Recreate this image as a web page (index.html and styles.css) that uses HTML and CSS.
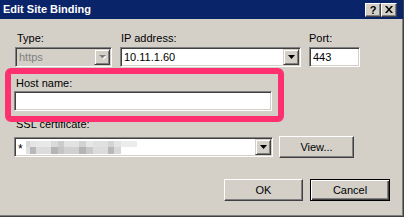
FILE: index.html
```html
<!DOCTYPE html>
<html>
<head>
<meta charset="utf-8">
<link rel="stylesheet" href="styles.css">
</head>
<body>
<div class="window">
  <div class="titlebar">
    <span class="title">Edit Site Binding</span>
    <div class="tb-buttons">
      <span class="tb-btn tb-help">?</span>
      <span class="tb-btn"><svg width="8" height="7" viewBox="0 0 8 7"><path d="M0 0h2l2 2.5L6 0h2L5 3.5 8 7H6L4 4.5 2 7H0l3-3.5z" fill="#000"/></svg></span>
    </div>
  </div>
  <div class="content">
    <div class="row1">
      <div class="field field-type">
        <label class="lbl">Type:</label>
        <div class="combo combo-disabled">
          <span class="combo-text">https</span>
          <span class="combo-btn"><svg width="7" height="5" viewBox="0 0 7 5"><polygon points="1,1 8,1 4.5,4.5" fill="#fff"/><polygon points="0,0 7,0 3.5,3.5" fill="#808080"/></svg></span>
        </div>
      </div>
      <div class="field field-ip">
        <label class="lbl">IP address:</label>
        <div class="combo">
          <span class="combo-text">10.11.1.60</span>
          <span class="combo-btn"><svg width="7" height="4" viewBox="0 0 7 4"><polygon points="0,0 7,0 3.5,4" fill="#000"/></svg></span>
        </div>
      </div>
      <div class="field field-port">
        <label class="lbl">Port:</label>
        <div class="textbox"><span class="tb-text">443</span></div>
      </div>
    </div>
    <div class="host">
      <label class="lbl">Host name:</label>
      <div class="textbox host-box"></div>
    </div>
    <div class="ssl">
      <label class="lbl">SSL certificate:</label>
      <div class="ssl-row">
        <div class="combo ssl-combo">
          <span class="combo-text"><span class="star">*</span><svg class="mosaic" width="112" height="13" viewBox="0 0 112 13">
            <rect x="0" y="0" width="4" height="6" fill="#d8d8d8"/>
            <rect x="4" y="0" width="6" height="6" fill="#e4e4e4"/>
            <rect x="10" y="0" width="15" height="6" fill="#e8e8e8"/>
            <rect x="25" y="0" width="7" height="6" fill="#dadada"/>
            <rect x="32" y="0" width="6" height="6" fill="#cccccc"/>
            <rect x="38" y="0" width="15" height="6" fill="#e2e2e2"/>
            <rect x="53" y="0" width="7" height="6" fill="#d2d2d2"/>
            <rect x="60" y="0" width="7" height="6" fill="#e6e6e6"/>
            <rect x="67" y="0" width="15" height="6" fill="#e0e0e0"/>
            <rect x="82" y="0" width="6" height="6" fill="#d4d4d4"/>
            <rect x="88" y="0" width="7" height="6" fill="#e4e4e4"/>
            <rect x="95" y="0" width="16" height="6" fill="#ececec"/>
            <rect x="0" y="6" width="4" height="7" fill="#e0e0e0"/>
            <rect x="4" y="6" width="6" height="7" fill="#b8b8b8"/>
            <rect x="10" y="6" width="15" height="7" fill="#dcdcdc"/>
            <rect x="25" y="6" width="7" height="7" fill="#b4b4b4"/>
            <rect x="32" y="6" width="6" height="7" fill="#c4c4c4"/>
            <rect x="38" y="6" width="15" height="7" fill="#d0d0d0"/>
            <rect x="53" y="6" width="7" height="7" fill="#b4b4b4"/>
            <rect x="60" y="6" width="7" height="7" fill="#c8c8c8"/>
            <rect x="67" y="6" width="15" height="7" fill="#dcdcdc"/>
            <rect x="82" y="6" width="6" height="7" fill="#b8b8b8"/>
            <rect x="88" y="6" width="7" height="7" fill="#d8d8d8"/>
          </svg></span>
          <span class="combo-btn"><svg width="7" height="4" viewBox="0 0 7 4"><polygon points="0,0 7,0 3.5,4" fill="#000"/></svg></span>
        </div>
        <button class="btn btn-view">View...</button>
      </div>
    </div>
    <div class="footer">
      <button class="btn btn-ok">OK</button>
      <button class="btn btn-default">Cancel</button>
    </div>
  </div>
  <div class="highlight"></div>
</div>
</body>
</html>
```
FILE: styles.css
```css
html, body {
  margin: 0;
  padding: 0;
}
body {
  width: 404px;
  height: 217px;
  overflow: hidden;
  background: #d4d0c8;
  font-family: "Liberation Sans", Arial, sans-serif;
  font-size: 11px;
  color: #000;
}
.window {
  position: relative;
  width: 404px;
  height: 217px;
  box-sizing: border-box;
  border-right: 1px solid #404040;
  border-bottom: 1px solid #404040;
  box-shadow: inset -1px -1px #808080;
  display: flex;
  flex-direction: column;
}
.titlebar {
  height: 19px;
  background: #0a246a;
  display: flex;
  align-items: center;
  padding: 0 6px 0 3px;
}
.title {
  color: #fff;
  font-weight: bold;
  font-size: 11px;
  line-height: 19px;
}
.tb-buttons {
  margin-left: auto;
  display: flex;
  gap: 0;
}
.tb-btn {
  width: 14px;
  height: 12px;
  background: #d4d0c8;
  border: 1px solid;
  border-color: #fff #404040 #404040 #fff;
  box-shadow: inset -1px -1px #808080;
  display: flex;
  align-items: center;
  justify-content: center;
  font-weight: bold;
  font-size: 11px;
  line-height: 12px;
}
.tb-btn + .tb-btn {
  margin-left: 0;
}
.content {
  flex: 1;
  padding: 13px 13px 0 14px;
  display: flex;
  flex-direction: column;
}
.lbl {
  display: block;
  height: 13px;
  line-height: 13px;
  padding-left: 2px;
}
.row1 {
  display: flex;
  gap: 8px;
  margin-left: 1px;
}
.field .lbl {
  margin-bottom: 2px;
}
.field-type { width: 97px; }
.field-ip { width: 181px; }
.field-ip .lbl { padding-left: 1px; }
.field-port { width: 51px; }
.field-port .lbl { padding-left: 0; }
.combo, .textbox {
  height: 20px;
  box-sizing: border-box;
  background: #fff;
  border: 1px solid;
  border-color: #808080 #fff #fff #808080;
  box-shadow: inset 1px 1px #404040, inset -1px -1px #d4d0c8;
  padding: 1px;
  display: flex;
  align-items: center;
}
.combo-disabled {
  background: #d4d0c8;
  color: #808080;
}
.combo-text {
  flex: 1;
  padding-left: 2px;
  display: flex;
  align-items: center;
  white-space: nowrap;
  overflow: hidden;
}
.combo-btn {
  width: 14px;
  height: 14px;
  background: #d4d0c8;
  border: 1px solid;
  border-color: #d4d0c8 #404040 #404040 #d4d0c8;
  box-shadow: inset 1px 1px #fff, inset -1px -1px #808080;
  display: flex;
  align-items: center;
  justify-content: center;
}
.tb-text {
  padding-left: 2px;
}
.host {
  margin-top: 10px;
}
.host .lbl {
  margin-bottom: 1px;
}
.host-box {
  width: 258px;
}
.ssl {
  margin-top: 7px;
}
.ssl-row {
  margin-top: 5px;
  display: flex;
  align-items: center;
  gap: 6px;
}
.ssl-combo {
  width: 259px;
}
.star {
  width: 8px;
  font-size: 12px;
  padding-top: 3px;
}
.mosaic {
  display: block;
}
.btn {
  height: 22px;
  box-sizing: border-box;
  background: #d4d0c8;
  border: 1px solid;
  border-color: #fff #404040 #404040 #fff;
  box-shadow: inset -1px -1px #808080;
  font-family: "Liberation Sans", Arial, sans-serif;
  font-size: 11px;
  color: #000;
  padding: 0;
  margin: 0;
}
.btn-view {
  width: 75px;
}
.footer {
  margin-top: 21px;
  display: flex;
  justify-content: flex-end;
  gap: 7px;
}
.btn-ok {
  width: 79px;
}
.btn-default {
  width: 80px;
  border: 1px solid #000;
  box-shadow: inset 1px 1px #fff, inset -1px -1px #404040, inset -2px -2px #808080;
}
.highlight {
  position: absolute;
  left: 5px;
  top: 68px;
  width: 279px;
  height: 54px;
  box-sizing: border-box;
  border: 6px solid #ff306f;
  border-radius: 6px;
}
```
